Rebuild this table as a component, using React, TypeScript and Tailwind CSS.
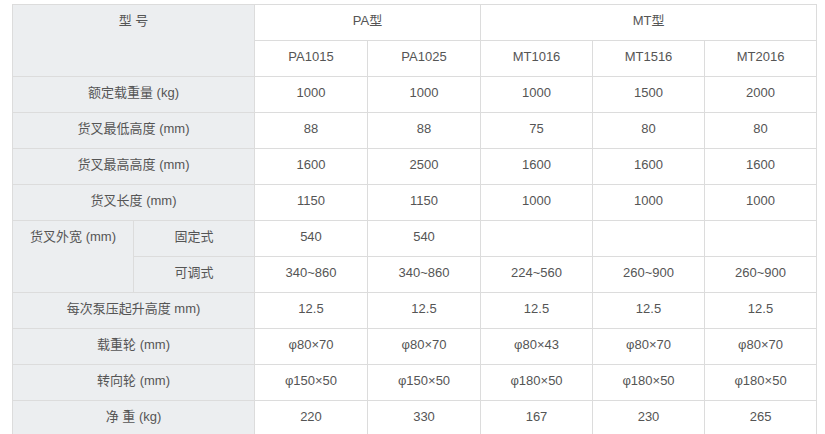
const ROWS: { label: string; values: string[] }[] = [
  { label: '额定载重量 (kg)', values: ['1000', '1000', '1000', '1500', '2000'] },
  { label: '货叉最低高度 (mm)', values: ['88', '88', '75', '80', '80'] },
  { label: '货叉最高高度 (mm)', values: ['1600', '2500', '1600', '1600', '1600'] },
  { label: '货叉长度 (mm)', values: ['1150', '1150', '1000', '1000', '1000'] },
]

const ROWS_AFTER: { label: string; values: string[] }[] = [
  { label: '每次泵压起升高度 mm)', values: ['12.5', '12.5', '12.5', '12.5', '12.5'] },
  { label: '载重轮 (mm)', values: ['φ80×70', 'φ80×70', 'φ80×43', 'φ80×70', 'φ80×70'] },
  { label: '转向轮 (mm)', values: ['φ150×50', 'φ150×50', 'φ180×50', 'φ180×50', 'φ180×50'] },
  { label: '净 重 (kg)', values: ['220', '330', '167', '230', '265'] },
]

const MODELS = ['PA1015', 'PA1025', 'MT1016', 'MT1516', 'MT2016']

const cell = 'border border-[#dcdcdc] h-[36px] p-0 align-top leading-[32px] text-center'
const head = `${cell} bg-[#eceef0]`

export default function App() {
  return (
    <div className="min-h-[434px] bg-white pl-[12px] pt-[4px] font-['Liberation_Sans','Noto_Sans_CJK_SC',sans-serif] text-[13px] text-[#555]">
      <table className="w-[805px] table-fixed border-collapse">
        <colgroup>
          <col className="w-[121px]" />
          <col className="w-[121px]" />
          <col className="w-[113px]" />
          <col className="w-[113px]" />
          <col className="w-[112px]" />
          <col className="w-[112px]" />
          <col className="w-[112px]" />
        </colgroup>
        <tbody>
          <tr>
            <td rowSpan={2} colSpan={2} className={head}>型 号</td>
            <td colSpan={2} className={cell}>PA型</td>
            <td colSpan={3} className={cell}>MT型</td>
          </tr>
          <tr>
            {MODELS.map((m) => (
              <td key={m} className={cell}>{m}</td>
            ))}
          </tr>
          {ROWS.map((r) => (
            <tr key={r.label}>
              <td colSpan={2} className={head}>{r.label}</td>
              {r.values.map((v, i) => (
                <td key={i} className={cell}>{v}</td>
              ))}
            </tr>
          ))}
          <tr>
            <td rowSpan={2} className={head}>货叉外宽 (mm)</td>
            <td className={head}>固定式</td>
            <td className={cell}>540</td>
            <td className={cell}>540</td>
            <td className={cell}></td>
            <td className={cell}></td>
            <td className={cell}></td>
          </tr>
          <tr>
            <td className={head}>可调式</td>
            {['340~860', '340~860', '224~560', '260~900', '260~900'].map((v, i) => (
              <td key={i} className={cell}>{v}</td>
            ))}
          </tr>
          {ROWS_AFTER.map((r) => (
            <tr key={r.label}>
              <td colSpan={2} className={head}>{r.label}</td>
              {r.values.map((v, i) => (
                <td key={i} className={cell}>{v}</td>
              ))}
            </tr>
          ))}
        </tbody>
      </table>
    </div>
  )
}
